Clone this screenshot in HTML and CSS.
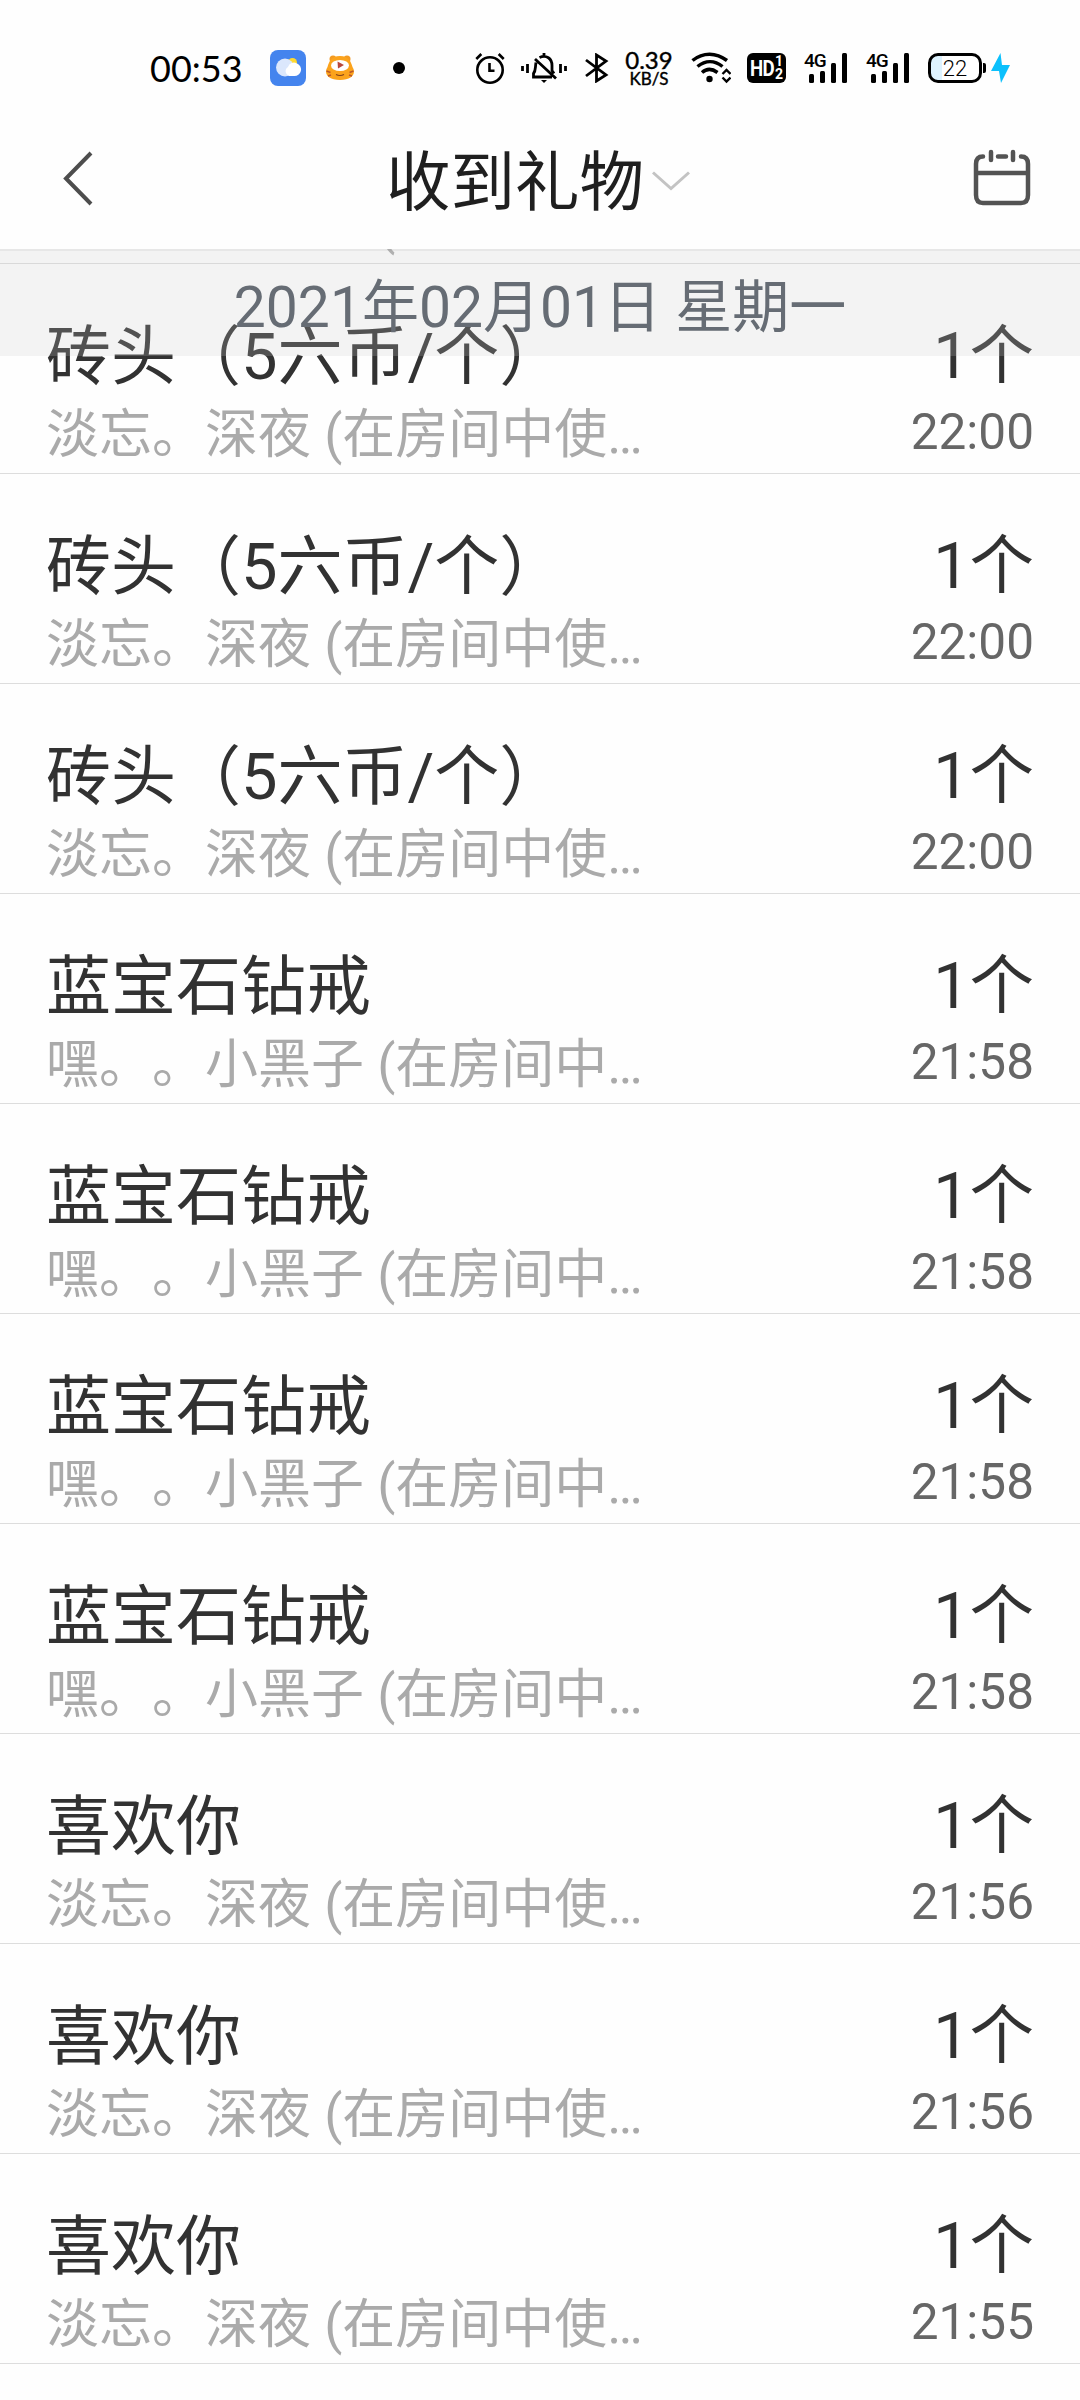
FILE: index.html
```
<!DOCTYPE html>
<html lang="zh-CN">
<head>
<meta charset="utf-8">
<title>收到礼物</title>
<link rel="stylesheet" href="styles.css">
</head>
<body>
<header class="statusbar">
  <span class="clock">00:53</span>
  <svg class="icon-weather" width="36" height="36" viewBox="0 0 36 36"><rect width="36" height="36" rx="8" fill="#4484ee"/><circle cx="22.500" cy="12.500" r="4.500" fill="#ffd92e"/><circle cx="15" cy="17.500" r="9" fill="#dbe7fc"/><path d="M19 26a5 5 0 0 1-1-9 6 6 0 0 1 9-3.500 6.500 6.500 0 0 1-3 12.500z" fill="#fff"/></svg>
  <svg class="icon-tiger" width="30" height="26" viewBox="0 0 30 26"><circle cx="8" cy="4" r="3.500" fill="#f39a22"/><circle cx="22" cy="4" r="3.500" fill="#f39a22"/><path d="M15 1C6 1 4 7 2.500 12c-4 6 0 13 12.500 13s16.500-7 12.500-13C26 7 24 1 15 1z" fill="#fba31c"/><ellipse cx="15" cy="10.500" rx="9" ry="5.500" fill="#fff"/><path d="M12.500 6.500l6.500 3.500-6 3.500z" fill="#b9473b"/><path d="M1.500 16l4 1.500M3 21l3-1M28.500 16l-4 1.500M27 21l-3-1" stroke="#b9562a" stroke-width="1.500"/><path d="M11 19.500q4 2 8 0" fill="none" stroke="#7f401a" stroke-width="1.200"/></svg>
  <svg class="icon-dot" width="12" height="12" viewBox="0 0 12 12"><circle cx="6" cy="6" r="6"/></svg>
  <svg class="icon-alarm" width="30" height="32" viewBox="0 0 30 32" fill="none" stroke="#000" stroke-width="2.600"><circle cx="15" cy="18" r="12.700"/><path d="M1.300 7l5-5M28.700 7l-5-5M14.500 11v7.700h5"/></svg>
  <svg class="icon-mute" width="46" height="32" viewBox="0 0 46 32" fill="none" stroke="#000" stroke-width="2.800"><path d="M1.500 14v5M6.500 12v9M39.500 12v9M44.500 14v5M23 1v3M18.500 5.500c7-3 12.500 1 12.500 8v5l2 3M15 10.500c-1 5 0 8-2.500 11v3.500H31M14 7l21 19.500"/><path d="M20 28h6l-3 3z" fill="#000" stroke="none"/></svg>
  <svg class="icon-bluetooth" width="24" height="30" viewBox="0 0 24 30" fill="none" stroke="#000" stroke-width="2.800"><path d="M1 7l20 15-9.500 6V2L21 8 1 23"/></svg>
  <div class="netspeed"><span class="rate">0.39</span><span class="unit">KB/S</span></div>
  <svg class="icon-wifi" width="40" height="32" viewBox="0 0 40 32" fill="none" stroke="#000" stroke-width="3.500"><path d="M1.500 8.500C12 0 25 0 36 8.500M6.500 14.500c8-6.500 17-6.500 25 0M11 20.500c4.500-4 10-4 15.500 0"/><circle cx="18.500" cy="27" r="3.200" fill="#000" stroke="none"/><path d="M31.500 22l4-4 4 4M31.500 25.500l4 4 4-4" stroke-width="2.400"/></svg>
  <div class="hd"><span class="hd-text">HD</span><span class="hd-sims"><span>1</span><span>2</span></span></div>
  <div class="signal"><span class="gen">4G</span><svg width="39" height="30" viewBox="0 0 39 30"><rect y="21" width="5" height="9" rx="1.500"/><rect x="11" y="18" width="5" height="12" rx="1.500"/><rect x="22" y="10" width="5" height="20" rx="1.500"/><rect x="33" width="5" height="30" rx="1.500"/></svg></div>
  <div class="signal"><span class="gen">4G</span><svg width="39" height="30" viewBox="0 0 39 30"><rect y="21" width="5" height="9" rx="1.500"/><rect x="11" y="18" width="5" height="12" rx="1.500"/><rect x="22" y="10" width="5" height="20" rx="1.500"/><rect x="33" width="5" height="30" rx="1.500"/></svg></div>
  <div class="battery">22</div><i class="battery-cap"></i>
  <svg class="icon-bolt" width="20" height="32" viewBox="0 0 20 32"><path d="M9.500 1L0 19h8l2 12L19 13h-8z" fill="#0cc0fc"/></svg>
</header>
<nav class="titlebar">
  <svg class="back" width="32" height="56" viewBox="0 0 32 56" fill="none" stroke="#4d4d4d" stroke-width="4"><path d="M29 2L4 27.500 29 53"/></svg>
  <h1 class="title">收到礼物</h1>
  <svg class="chevron" width="38" height="20" viewBox="0 0 38 20" fill="none" stroke="#c3c3c3" stroke-width="3"><path d="M1 1.500l18 16 18-16"/></svg>
  <svg class="calendar" width="58" height="57" viewBox="0 0 58 57" fill="none" stroke="#535353" stroke-width="4.500" stroke-linecap="round"><path d="M10 7.500C5 7.500 3 10 3 15v31c0 5 2 8 7 8h38c5 0 7-3 7-8V15c0-5-2-7.500-7-7.500M25 7.500h8M18 3v8M40 3v8M3 24h52"/></svg>
</nav>
<main class="viewport">
  <ul class="gifts">
    <li class="gift"><span class="name">砖头（5六币/个）</span><span class="count">1个</span><span class="from">嘿。。小黑子 (在房间中…</span><time class="time">22:00</time></li>
    <li class="gift"><span class="name">砖头（5六币/个）</span><span class="count">1个</span><span class="from">淡忘。深夜 (在房间中使…</span><time class="time">22:00</time></li>
    <li class="gift"><span class="name">砖头（5六币/个）</span><span class="count">1个</span><span class="from">淡忘。深夜 (在房间中使…</span><time class="time">22:00</time></li>
    <li class="gift"><span class="name">砖头（5六币/个）</span><span class="count">1个</span><span class="from">淡忘。深夜 (在房间中使…</span><time class="time">22:00</time></li>
    <li class="gift"><span class="name">蓝宝石钻戒</span><span class="count">1个</span><span class="from">嘿。。小黑子 (在房间中…</span><time class="time">21:58</time></li>
    <li class="gift"><span class="name">蓝宝石钻戒</span><span class="count">1个</span><span class="from">嘿。。小黑子 (在房间中…</span><time class="time">21:58</time></li>
    <li class="gift"><span class="name">蓝宝石钻戒</span><span class="count">1个</span><span class="from">嘿。。小黑子 (在房间中…</span><time class="time">21:58</time></li>
    <li class="gift"><span class="name">蓝宝石钻戒</span><span class="count">1个</span><span class="from">嘿。。小黑子 (在房间中…</span><time class="time">21:58</time></li>
    <li class="gift"><span class="name">喜欢你</span><span class="count">1个</span><span class="from">淡忘。深夜 (在房间中使…</span><time class="time">21:56</time></li>
    <li class="gift"><span class="name">喜欢你</span><span class="count">1个</span><span class="from">淡忘。深夜 (在房间中使…</span><time class="time">21:56</time></li>
    <li class="gift"><span class="name">喜欢你</span><span class="count">1个</span><span class="from">淡忘。深夜 (在房间中使…</span><time class="time">21:55</time></li>
  </ul>
  <div class="date">2021年02月01日 星期一</div>
</main>
</body>
</html>
```
FILE: styles.css
```
* { box-sizing: border-box; margin: 0; padding: 0; }
body {
  width: 1080px; height: 2400px; overflow: hidden;
  display: flex; flex-direction: column;
  background: #fefefe; color: #323232;
  font-family: Roboto, "Noto Sans CJK SC", sans-serif;
  font-kerning: none;
  text-spacing-trim: space-all;
}
svg { display: block; flex: none; }

.statusbar { height: 112px; padding-top: 24px; display: flex; align-items: center; flex: none; color: #000; }
.clock { width: 93px; margin-left: 150px; font: 36px/40px Lato, sans-serif; white-space: nowrap; }
.icon-weather { margin-left: 27px; }
.icon-tiger { margin-left: 19px; }
.icon-dot { margin-left: 38px; }
.icon-alarm { margin-left: 70px; }
.icon-mute { margin-left: 16px; }
.icon-bluetooth { margin-left: 18px; }
.netspeed { width: 50px; margin-left: 15px; display: flex; flex-direction: column; align-items: center; font-family: Lato, sans-serif; }
.rate { font-size: 24px; line-height: 21px; -webkit-text-stroke: 0.4px #000; }
.unit { font-size: 17px; line-height: 18px; -webkit-text-stroke: 0.4px #000; }
.icon-wifi { margin-left: 17px; }
.hd { width: 39px; height: 30px; margin-left: 16px; border-radius: 6px; background: #000; color: #fff; display: flex; justify-content: center; align-items: center; font-weight: 700; }
.hd-text { font-size: 22px; letter-spacing: -1px; transform: scaleX(0.85); margin: 0 -1px 0 -2px; }
.hd-sims { display: flex; flex-direction: column; font-size: 14px; line-height: 13px; }
.signal { width: 44px; height: 30px; margin-left: 18px; position: relative; display: flex; justify-content: flex-end; }
.gen { position: absolute; left: 0; top: -2px; font: 500 19px/20px Roboto, sans-serif; letter-spacing: -1px; }
.battery { width: 54px; height: 30px; margin-left: 18px; border: 3px solid #000; border-radius: 10px; background: linear-gradient(90deg, #def3ff 11px, #fff 11px); text-align: center; font: 300 22px/25px Roboto, sans-serif; }
.battery-cap { width: 3px; height: 10px; margin-left: 1px; background: #000; border-radius: 0 2px 2px 0; }
.icon-bolt { margin-left: 5px; }

.titlebar { height: 137px; display: flex; flex: none; align-items: flex-start; }
.back { margin: 39px 0 0 62px; }
.title { margin: 24px 0 0 292px; font-size: 64.5px; line-height: 94px; font-weight: 400; color: #1f1f1f; white-space: nowrap; }
.chevron { margin: 59px 0 0 8px; }
.calendar { margin: 37px 49px 0 auto; }

.viewport { position: relative; flex: 1; min-height: 0; overflow: hidden; }
.gifts { list-style: none; margin-top: -195px; }
.gift {
  height: 210px; padding: 49px 46px 0; border-bottom: 1px solid #ddd;
  display: grid; grid-template-columns: 1fr auto; grid-template-rows: 85px 74px;
  white-space: nowrap;
}
.name, .count { font-size: 64.5px; line-height: 88px; }
.name { font-size: 65px; }
.count { text-align: right; line-height: 86px; }
.from { font-size: 53px; line-height: 74px; color: #aaa; }
.time { font-size: 49.5px; line-height: 68px; color: #666; text-align: right; }
.date {
  position: absolute; inset: 0 0 auto; height: 107px; padding-top: 17px;
  border-top: 2px solid rgba(150, 150, 150, 0.12);
  background: rgba(203, 203, 203, 0.21);
  font-size: 57px; line-height: 80px; text-align: center; color: #666c74;
}
```
